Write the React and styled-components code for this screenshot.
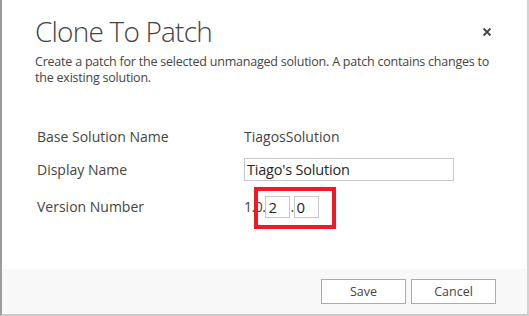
import React from 'react';
import styled, { createGlobalStyle } from 'styled-components';

const GlobalStyle = createGlobalStyle`
  html, body {
    margin: 0;
    padding: 0;
    background: #ffffff;
  }
  body {
    font-family: "Open Sans", "Noto Sans", sans-serif;
    color: #444444;
  }
  * { box-sizing: border-box; }
`;

const Dialog = styled.div`
  width: 529px;
  height: 316px;
  display: flex;
  flex-direction: column;
  background: #ffffff;
  border-left: 2px solid #9c9c9c;
  border-right: 2px solid #d2d2d2;
  border-bottom: 2px solid #c9c9c9;
`;

const Body = styled.div`
  flex: 1;
  padding: 0 35px 0 33px;
`;

const Header = styled.div`
  display: flex;
  align-items: flex-start;
  justify-content: space-between;
  margin-top: 12px;
`;

const Title = styled.h1`
  margin: 0;
  font-size: 28px;
  font-weight: 300;
  line-height: 38px;
  letter-spacing: -0.8px;
  color: #444444;
`;

const CloseButton = styled.button`
  border: 0;
  background: none;
  padding: 0;
  margin: 15px 0 0 0;
  width: 10px;
  height: 10px;
  display: flex;
  cursor: pointer;
`;

const Description = styled.p`
  margin: 4px 0 0 0;
  font-size: 12.5px;
  line-height: 16px;
  letter-spacing: -0.22px;
  color: #444444;
`;

const Form = styled.div`
  margin-top: 39px;
  padding-left: 2px;
`;

const FieldRow = styled.div`
  display: grid;
  grid-template-columns: 207px 1fr;
  align-items: center;
  height: 23px;
  margin-top: ${(p) => p.$gap || 0}px;
`;

const Label = styled.div`
  font-size: 14px;
  color: #444444;
`;

const Value = styled.div`
  font-size: 14px;
  color: #444444;
`;

const TextInput = styled.input`
  width: 210px;
  height: 23px;
  border: 1px solid #c6c6c6;
  padding: 0 2px;
  font-family: "Open Sans", "Noto Sans", sans-serif;
  font-size: 14.5px;
  letter-spacing: -0.2px;
  color: #262626;
  outline: none;
`;

const VersionGroup = styled.div`
  position: relative;
  display: flex;
  align-items: center;
  font-size: 14px;
  letter-spacing: -0.5px;
  color: #444444;
`;

const VersionInput = styled.input`
  width: 25px;
  height: 22px;
  border: 1px solid #c6c6c6;
  padding: 0 2px;
  font-family: "Open Sans", "Noto Sans", sans-serif;
  font-size: 15px;
  color: #262626;
  outline: none;
`;

const Highlight = styled.div`
  position: absolute;
  left: 10px;
  top: -9px;
  width: 82px;
  height: 42px;
  border: 4px solid #ed1c24;
  pointer-events: none;
`;

const Footer = styled.div`
  display: flex;
  justify-content: flex-end;
  gap: 5px;
  height: 45px;
  padding: 10px 31px 0 0;
  background: #f8f8f8;
`;

const Button = styled.button`
  width: 85px;
  height: 25px;
  border: 1px solid #ababab;
  background: #ffffff;
  font-family: "Open Sans", "Noto Sans", sans-serif;
  font-size: 12.5px;
  color: #444444;
  padding: 0;
`;

export default function App() {
  return (
    <>
      <GlobalStyle />
      <Dialog>
        <Body>
          <Header>
            <Title>Clone To Patch</Title>
            <CloseButton aria-label="Close">
              <svg width="10" height="10" viewBox="0 0 10 10">
                <path d="M1.5 1.5 L8.5 8.5 M8.5 1.5 L1.5 8.5" stroke="#444" strokeWidth="1.8" />
              </svg>
            </CloseButton>
          </Header>
          <Description>
            Create a patch for the selected unmanaged solution. A patch contains changes to the existing solution.
          </Description>
          <Form>
            <FieldRow>
              <Label>Base Solution Name</Label>
              <Value>TiagosSolution</Value>
            </FieldRow>
            <FieldRow $gap={10}>
              <Label>Display Name</Label>
              <TextInput defaultValue="Tiago's Solution" />
            </FieldRow>
            <FieldRow $gap={14}>
              <Label>Version Number</Label>
              <VersionGroup>
                <span>1.0.</span>
                <VersionInput defaultValue="2" />
                <span>.</span>
                <VersionInput defaultValue="0" />
                <Highlight />
              </VersionGroup>
            </FieldRow>
          </Form>
        </Body>
        <Footer>
          <Button>Save</Button>
          <Button>Cancel</Button>
        </Footer>
      </Dialog>
    </>
  );
}
